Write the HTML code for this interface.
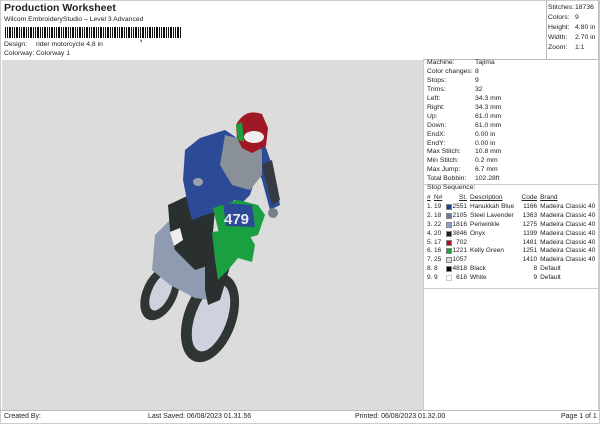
<!DOCTYPE html>
<html><head><meta charset="utf-8">
<style>
*{margin:0;padding:0;box-sizing:border-box}
body{width:600px;height:424px;background:#fff;font-family:"Liberation Sans",sans-serif;color:#222;position:relative;overflow:hidden;font-size:7px}
.a{position:absolute;white-space:nowrap}
.t{font-size:10.5px;font-weight:bold}
.row{position:absolute;left:427px;font-size:6.8px;white-space:nowrap}
.row span{position:absolute;left:48px;top:0;white-space:nowrap}
table{position:absolute;left:427px;top:194px;border-collapse:collapse;font-size:6.5px}
td{padding:0;height:8.9px;line-height:8.9px;white-space:nowrap}
.sw{display:inline-block;width:6px;height:6px;margin-top:1px;border:1px solid #888}
u{text-decoration:underline}
</style></head><body>
<div style="position:absolute;left:0;top:0;width:600px;height:424px;border:1px solid #ccc"></div>
<div class="a t" style="left:4px;top:2px">Production Worksheet</div>
<div class="a" style="left:4px;top:16px;font-size:6.8px">Wilcom EmbroideryStudio – Level 3 Advanced</div>
<div class="a" style="left:5px;top:27px;width:176px;height:11px;background:repeating-linear-gradient(90deg,#111 0 1px,#fff 1px 2px,#111 2px 3px,#fff 3px 4px,#111 4px 6px,#fff 6px 7px);"></div>
<div class="a" style="left:140px;top:34px;font-weight:bold;font-size:8px">,</div>
<div class="a" style="left:4px;top:41px;font-size:6.8px">Design:</div><div class="a" style="left:36px;top:41px;font-size:6.8px">rider motorcycle 4,8 in</div>
<div class="a" style="left:4px;top:50px;font-size:6.8px">Colorway:</div><div class="a" style="left:36px;top:50px;font-size:6.8px">Colorway 1</div>
<div style="position:absolute;left:546px;top:0;width:1px;height:59px;background:#bbb"></div>
<div style="position:absolute;left:598px;top:0;width:1px;height:59px;background:#bbb"></div>
<div class="a" style="left:548px;top:3px;line-height:10px;font-size:6.8px">Stitches:<br>Colors:<br>Height:<br>Width:<br>Zoom:</div>
<div class="a" style="left:575px;top:3px;line-height:10px;font-size:6.8px">18736<br>9<br>4.80 in<br>2.70 in<br>1:1</div>
<div style="position:absolute;left:2px;top:60px;width:421px;height:350px;background:#dcdcdc"></div>
<div style="position:absolute;left:423px;top:59px;width:176px;height:352px;border-left:1px solid #ccc;border-right:1px solid #ccc"></div>
<div style="position:absolute;left:0;top:410px;width:600px;height:1px;background:#bbb"></div>
<div style="position:absolute;left:423px;top:59px;width:176px;height:1px;background:#bbb"></div>
<div style="position:absolute;left:424px;top:184px;width:175px;height:1px;background:#ccc"></div>
<div style="position:absolute;left:424px;top:288px;width:175px;height:1px;background:#ccc"></div>
<svg style="position:absolute;left:0;top:0" width="424" height="410" viewBox="0 0 424 410">
<ellipse cx="160" cy="293" rx="17" ry="29" transform="rotate(25 160 293)" fill="#2f3533"/>
<ellipse cx="161" cy="292" rx="9" ry="20" transform="rotate(25 161 292)" fill="#cdd2de"/>
<ellipse cx="210" cy="318" rx="26" ry="46" transform="rotate(20 210 318)" fill="#2f3533"/>
<ellipse cx="211" cy="318" rx="16" ry="35" transform="rotate(20 211 318)" fill="#cdd2de"/>
<path d="M155 235 L175 215 L200 225 L215 260 L210 300 L195 298 L170 285 L152 270 Z" fill="#8f9bb0"/>
<path d="M168 205 L200 190 L215 210 L210 265 L195 270 L175 250 L170 230 Z" fill="#2a3030"/>
<path d="M205 240 L225 235 L232 260 L220 300 L208 305 L205 290 Z" fill="#2a3030"/>
<path d="M212 232 L245 228 L255 245 L252 262 L238 258 L228 270 L218 280 L215 260 Z" fill="#1aa040"/>
<path d="M185 150 L200 138 L225 130 L240 140 L250 130 L265 145 L272 165 L280 205 L270 210 L262 180 L258 170 L250 195 L240 205 L235 200 L222 210 L205 215 L192 220 L188 205 L183 180 Z" fill="#2c4a96"/>
<path d="M225 135 L245 140 L262 150 L262 175 L250 190 L232 185 L220 165 Z" fill="#8a9098"/>
<path d="M262 165 L272 160 L280 200 L272 205 Z" fill="#353b40"/>
<path d="M213 208 L238 200 L258 205 L265 215 L258 235 L240 240 L220 238 Z" fill="#1aa040"/>
<path d="M223 203 L252 205 L255 227 L226 226 Z" fill="#2c4a96"/>
<text x="224" y="224" font-family="Liberation Sans" font-size="15" font-weight="bold" fill="#e8e8f0">479</text>
<path d="M236 125 Q245 108 262 114 L268 128 L266 146 L252 153 L242 148 L237 138 Z" fill="#a01826"/>
<path d="M236 125 L242 122 L244 142 L238 140 Z" fill="#1aa040"/>
<ellipse cx="254" cy="137" rx="10" ry="6" fill="#eee"/>
<ellipse cx="198" cy="182" rx="5" ry="4" fill="#9aa0a8"/>
<ellipse cx="273" cy="213" rx="5" ry="5" fill="#7a8088"/>
<path d="M170 232 L180 228 L183 240 L174 246 Z" fill="#eee"/>
</svg>
<div class="row" style="top:59px">Machine:<span>Tajima</span></div>
<div class="row" style="top:68px">Color changes:<span>8</span></div>
<div class="row" style="top:77px">Stops:<span>9</span></div>
<div class="row" style="top:86px">Trims:<span>32</span></div>
<div class="row" style="top:95px">Left:<span>34.3 mm</span></div>
<div class="row" style="top:104px">Right:<span>34.3 mm</span></div>
<div class="row" style="top:113px">Up:<span>61.0 mm</span></div>
<div class="row" style="top:122px">Down:<span>61.0 mm</span></div>
<div class="row" style="top:131px">EndX:<span>0.00 in</span></div>
<div class="row" style="top:140px">EndY:<span>0.00 in</span></div>
<div class="row" style="top:148px">Max Stitch:<span>10.8 mm</span></div>
<div class="row" style="top:157px">Min Stitch:<span>0.2 mm</span></div>
<div class="row" style="top:166px">Max Jump:<span>6.7 mm</span></div>
<div class="row" style="top:175px">Total Bobbin:<span>102.28ft</span></div>
<div class="row" style="top:184px">Stop Sequence:</div>
<table>
<tr><td style="width:7px"><u>#</u></td><td style="width:12px"><u>N#</u></td><td style="width:21px;text-align:right"><u>St.</u></td><td style="width:46px;padding-left:3px"><u>Description</u></td><td style="width:23px;text-align:right"><u>Code</u></td><td style="padding-left:3px"><u>Brand</u></td></tr>
<tr><td>1.</td><td>19</td><td style="text-align:right"><i class="sw" style="background:#1f3f8f;float:left"></i>2551</td><td style="padding-left:3px">Hanukkah Blue</td><td style="text-align:right">1166</td><td style="padding-left:3px">Madeira Classic 40</td></tr>
<tr><td>2.</td><td>18</td><td style="text-align:right"><i class="sw" style="background:#6b7a90;float:left"></i>2105</td><td style="padding-left:3px">Steel Lavender</td><td style="text-align:right">1363</td><td style="padding-left:3px">Madeira Classic 40</td></tr>
<tr><td>3.</td><td>22</td><td style="text-align:right"><i class="sw" style="background:#8fa0c8;float:left"></i>1816</td><td style="padding-left:3px">Periwinkle</td><td style="text-align:right">1275</td><td style="padding-left:3px">Madeira Classic 40</td></tr>
<tr><td>4.</td><td>20</td><td style="text-align:right"><i class="sw" style="background:#1a1f26;float:left"></i>3846</td><td style="padding-left:3px">Onyx</td><td style="text-align:right">1199</td><td style="padding-left:3px">Madeira Classic 40</td></tr>
<tr><td>5.</td><td>17</td><td style="text-align:right"><i class="sw" style="background:#a01020;float:left"></i>702</td><td style="padding-left:3px"></td><td style="text-align:right">1481</td><td style="padding-left:3px">Madeira Classic 40</td></tr>
<tr><td>6.</td><td>16</td><td style="text-align:right"><i class="sw" style="background:#1aa040;float:left"></i>1221</td><td style="padding-left:3px">Kelly Green</td><td style="text-align:right">1251</td><td style="padding-left:3px">Madeira Classic 40</td></tr>
<tr><td>7.</td><td>25</td><td style="text-align:right"><i class="sw" style="background:#d8d8d0;float:left"></i>1057</td><td style="padding-left:3px"></td><td style="text-align:right">1410</td><td style="padding-left:3px">Madeira Classic 40</td></tr>
<tr><td>8.</td><td>8</td><td style="text-align:right"><i class="sw" style="background:#000;float:left"></i>4818</td><td style="padding-left:3px">Black</td><td style="text-align:right">8</td><td style="padding-left:3px">Default</td></tr>
<tr><td>9.</td><td>9</td><td style="text-align:right"><i class="sw" style="background:#fff;float:left;border-color:#ccc"></i>618</td><td style="padding-left:3px">White</td><td style="text-align:right">9</td><td style="padding-left:3px">Default</td></tr>
</table>
<div class="a" style="left:4px;top:413px">Created By:</div>
<div class="a" style="left:148px;top:413px">Last Saved: 06/08/2023 01.31.56</div>
<div class="a" style="left:355px;top:413px">Printed: 06/08/2023 01.32.00</div>
<div class="a" style="left:561px;top:413px">Page 1 of 1</div>
</body></html>
